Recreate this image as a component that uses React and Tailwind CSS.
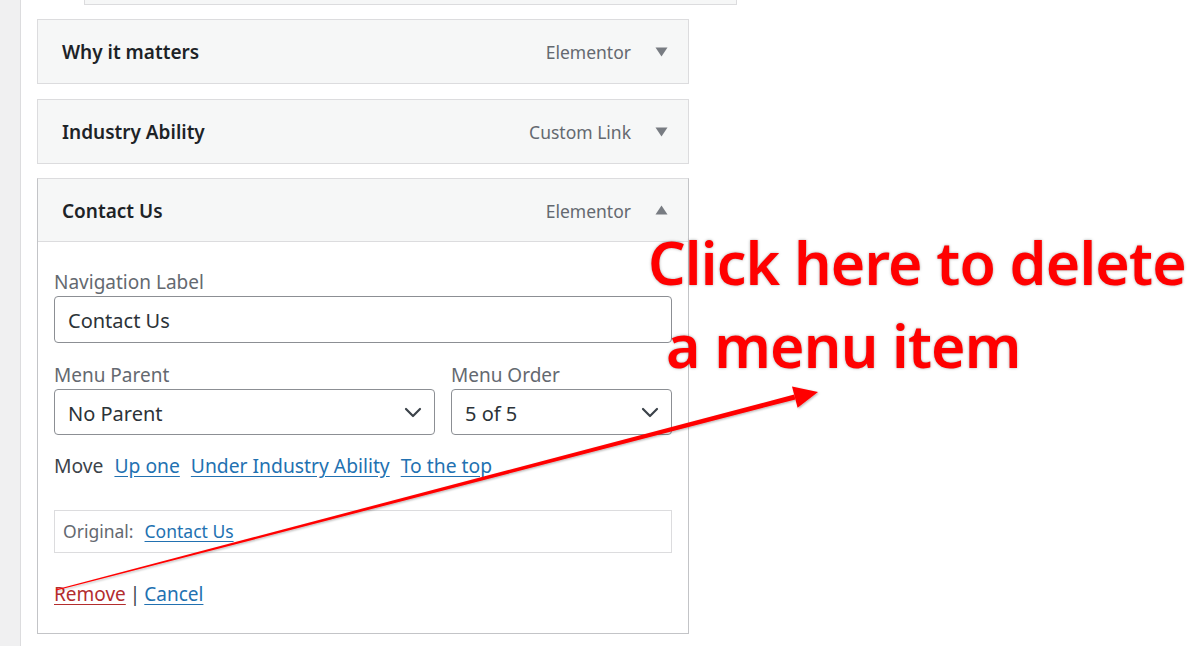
import React from "react";

const font = { fontFamily: '"Noto Sans", "Open Sans", sans-serif' };

function Caret({ up }) {
  return (
    <svg width="13" height="10" viewBox="0 0 13 10" className="shrink-0">
      {up ? (
        <polygon points="0.5,9.5 12.5,9.5 6.5,0.5" fill="#787c82" />
      ) : (
        <polygon points="0.5,0.5 12.5,0.5 6.5,9.5" fill="#787c82" />
      )}
    </svg>
  );
}

function Chevron() {
  return (
    <svg width="18" height="11" viewBox="0 0 18 11" className="shrink-0">
      <path d="M2 2 L9 9 L16 2" fill="none" stroke="#3c434a" strokeWidth="2.2" strokeLinecap="round" strokeLinejoin="round" />
    </svg>
  );
}

function Header({ title, type, up, bottomBorder }) {
  return (
    <div className={`flex h-[63px] items-center justify-between bg-[#f6f7f7] pl-[24px] pr-[20px] ${bottomBorder ? "border-b border-[#dcdcde]" : ""}`}>
      <span className="pt-[2px] text-[19px] font-semibold text-[#1d2327]">{title}</span>
      <div className="flex items-center gap-[24px]">
        <span className="pt-[2px] text-[17.5px] text-[#646970]">{type}</span>
        <Caret up={up} />
      </div>
    </div>
  );
}

export default function App() {
  return (
    <div className="relative flex h-[646px] w-[1201px] overflow-hidden bg-white" style={font}>
      <div className="h-full w-[21px] shrink-0 border-r border-[#dcdcde] bg-[#f0f0f1]" />
      <div className="flex flex-col pl-[16px]">
        <div className="ml-[47px] h-[5px] w-[653px] border-x border-b border-[#dcdcde] bg-[#f6f7f7]" />
        <div className="mt-[14px] w-[652px] border border-[#dcdcde]">
          <Header title="Why it matters" type="Elementor" />
        </div>
        <div className="mt-[15px] w-[652px] border border-[#dcdcde]">
          <Header title="Industry Ability" type="Custom Link" />
        </div>
        <div className="mt-[14px] w-[652px] border border-[#c3c4c7] border-t-[#dcdcde]">
          <Header title="Contact Us" type="Elementor" up bottomBorder />
          <div className="flex flex-col px-[16px] pb-[27px] pt-[26px]">
            <div className="h-[28px] text-[19px] leading-[28px] text-[#646970]">Navigation Label</div>
            <div className="flex h-[47px] items-center rounded-[4px] border border-[#8c8f94] px-[13px] pt-[3px] text-[20px] text-[#2c3338]">
              Contact Us
            </div>
            <div className="mt-[18px] grid grid-cols-[381px_221px] gap-x-[16px]">
              <div className="flex flex-col">
                <div className="h-[28px] text-[19px] leading-[28px] text-[#646970]">Menu Parent</div>
                <div className="flex h-[46px] items-center justify-between rounded-[4px] border border-[#8c8f94] pl-[13px] pr-[12px] text-[20px] text-[#2c3338]">
                  <span className="pt-[3px]">No Parent</span>
                  <Chevron />
                </div>
              </div>
              <div className="flex flex-col">
                <div className="h-[28px] text-[19px] leading-[28px] text-[#646970]">Menu Order</div>
                <div className="flex h-[46px] items-center justify-between rounded-[4px] border border-[#8c8f94] pl-[13px] pr-[12px] text-[20px] text-[#2c3338]">
                  <span className="pt-[3px]">5 of 5</span>
                  <Chevron />
                </div>
              </div>
            </div>
            <div className="mt-[19px] flex h-[24px] items-center gap-[11px] text-[19.3px] text-[#3c434a]">
              <span>Move</span>
              <a className="text-[#2271b1] underline underline-offset-[3px]">Up one</a>
              <a className="text-[#2271b1] underline underline-offset-[3px]">Under Industry Ability</a>
              <a className="text-[#2271b1] underline underline-offset-[3px]">To the top</a>
            </div>
            <div className="mt-[32px] flex h-[43px] items-center gap-[11px] border border-[#dcdcde] px-[8px] text-[17.5px]">
              <span className="text-[#646970]">Original:</span>
              <a className="text-[#2271b1] underline underline-offset-[3px]">Contact Us</a>
            </div>
            <div className="mt-[29px] flex h-[24px] items-center gap-[4px] text-[19px] text-[#3c434a]">
              <a className="text-[#b32d2e] underline underline-offset-[3px]">Remove</a>
              <span>|</span>
              <a className="text-[#2271b1] underline underline-offset-[3px]">Cancel</a>
            </div>
          </div>
        </div>
      </div>

      <div className="pointer-events-none absolute left-[648px] top-[221px] flex flex-col whitespace-nowrap text-[59px] font-semibold leading-[83px] tracking-[-0.8px] text-[#ff0000] [text-shadow:0_0_3px_rgba(0,0,0,0.35)]">
        <span>Click here to delete</span>
        <span className="ml-[18px]">a menu item</span>
      </div>

      <svg className="pointer-events-none absolute left-0 top-0" width="1201" height="646" viewBox="0 0 1201 646">
        <defs>
          <filter id="sh" x="-10%" y="-10%" width="120%" height="120%">
            <feDropShadow dx="1" dy="1" stdDeviation="1.2" floodColor="#000" floodOpacity="0.3" />
          </filter>
        </defs>
        <g filter="url(#sh)" fill="#ff0000">
          <polygon points="56.2,590.6 55.8,589.4 794.2,394.6 795.4,399.4" />
          <polygon points="818,392 792,386.4 797.6,407.7" />
        </g>
      </svg>
    </div>
  );
}
